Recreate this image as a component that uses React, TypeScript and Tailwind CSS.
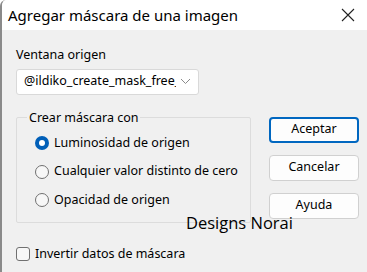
import React from 'react'

const FONT = { fontFamily: '"Segoe UI", "Noto Sans", "Open Sans", sans-serif' }

function Radio({ label, checked }: { label: string; checked?: boolean }) {
  return (
    <div className="flex items-center gap-[5px] h-[28.5px]">
      {checked ? (
        <span className="w-[14px] h-[14px] rounded-full bg-[#005fb8] flex items-center justify-center">
          <span className="w-[6px] h-[6px] rounded-full bg-white" />
        </span>
      ) : (
        <span className="w-[14px] h-[14px] rounded-full border border-[#707070] bg-[#f7f7f7]" />
      )}
      <span>{label}</span>
    </div>
  )
}

function Btn({ label, primary }: { label: string; primary?: boolean }) {
  return (
    <div
      className={`w-[90px] h-[26px] rounded-[4px] bg-[#fdfdfd] flex items-center justify-center ${
        primary ? 'border-2 border-[#0067c0]' : 'border border-[#d0d0d0]'
      }`}
    >
      {label}
    </div>
  )
}

export default function App() {
  return (
    <div
      className="relative w-[367px] h-[272px] bg-[#f0f0f0] border-l-2 border-[#8a8a8a] rounded-tl-[6px] overflow-hidden text-[12.5px] text-black"
      style={FONT}
    >
      {/* Title bar */}
      <div className="h-[30px] bg-white flex items-center justify-between pl-[6px] pr-[12px]">
        <span className="text-[15px]">Agregar máscara de una imagen</span>
        <svg width="14" height="14" viewBox="0 0 14 14">
          <path d="M1 1 L13 13 M13 1 L1 13" stroke="#222" strokeWidth="1.1" />
        </svg>
      </div>

      <div className="pl-[14px] pt-[16px]">
        <div>Ventana origen</div>
        <div className="mt-[4px] w-[183px] h-[26px] bg-white border border-[#d9d9d9] rounded-[3px] flex items-center pl-[7px] pr-[7px] gap-[4px]">
          <span className="flex-1 overflow-hidden whitespace-nowrap">@ildiko_create_mask_free_01</span>
          <svg width="11" height="7" viewBox="0 0 11 7">
            <path d="M1 1 L5.5 5.5 L10 1" fill="none" stroke="#8a8a8a" strokeWidth="1" />
          </svg>
        </div>

        <div className="flex mt-[23px]">
          <fieldset className="w-[235px] h-[111px] border border-[#dcdcdc] rounded-[2px] pl-[18px] pt-[5px] -mt-[6px]">
            <legend className="ml-[-8px] px-[2px] leading-[12px]">Crear máscara con</legend>
            <Radio label="Luminosidad de origen" checked />
            <Radio label="Cualquier valor distinto de cero" />
            <Radio label="Opacidad de origen" />
          </fieldset>
          <div className="ml-[18px] flex flex-col gap-[12px] -mt-[1px]">
            <Btn label="Aceptar" primary />
            <Btn label="Cancelar" />
            <Btn label="Ayuda" />
          </div>
        </div>

        <div className="flex items-center gap-[5px] mt-[22px]">
          <span className="w-[14px] h-[14px] rounded-[3px] border border-[#707070] bg-[#f7f7f7]" />
          <span>Invertir datos de máscara</span>
        </div>
      </div>

      {/* watermark */}
      <div className="absolute left-[184px] top-[211px] text-[16.5px] text-black" style={{ fontFamily: '"Open Sans", sans-serif' }}>
        Designs Norai
      </div>
    </div>
  )
}
